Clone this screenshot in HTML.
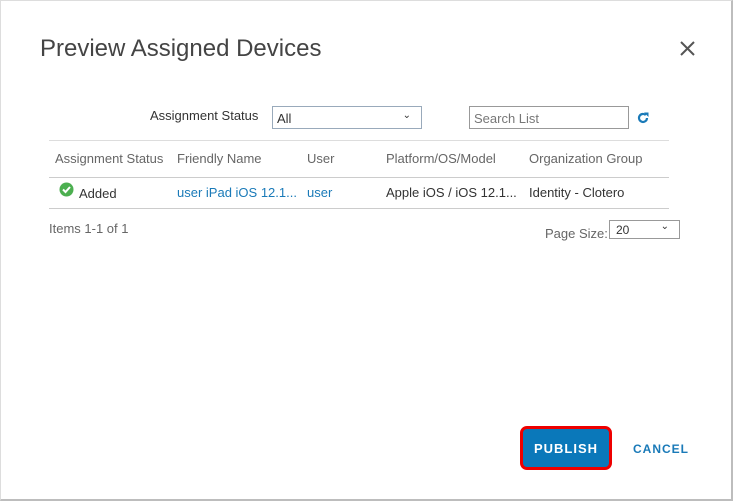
<!DOCTYPE html>
<html><head><style>
*{margin:0;padding:0;box-sizing:border-box}
body{width:735px;height:503px;background:#fff;font-family:"Liberation Sans",sans-serif;position:relative;overflow:hidden}
.frame{position:absolute;left:0;top:0;width:733px;height:501px;border-right:2px solid #bdbdbd;border-bottom:2px solid #bdbdbd;border-top:1px solid #ddd;border-left:1px solid #ddd}
.a{position:absolute;white-space:nowrap}
.h{color:#666;font-size:13px}
.c{color:#333;font-size:13px}
.l{color:#1a7ab8;font-size:13px}
.line{position:absolute;left:49px;width:620px;height:1px;background:#ddd}
</style></head><body>
<div class="frame"></div>
<div class="a" style="left:40px;top:35px;font-size:24px;color:#444">Preview Assigned Devices</div>
<svg class="a" style="left:680px;top:41px" width="15" height="15"><path d="M1 1L14 14M14 1L1 14" stroke="#555" stroke-width="2"/></svg>
<div class="a" style="left:150px;top:108px;font-size:13px;color:#333">Assignment Status</div>
<div class="a" style="left:272px;top:106px;width:150px;height:23px;border:1px solid #9ab;font-size:13px;color:#333;padding:4px 4px">All<span style="position:absolute;right:10px;top:3px;font-size:10px">⌄</span></div>
<div class="a" style="left:469px;top:106px;width:160px;height:23px;border:1px solid #999;font-size:13px;color:#777;padding:4px 4px">Search List</div>
<svg class="a" style="left:636px;top:111px" width="14" height="14" viewBox="0 0 14 14"><path d="M11 7a4 4 0 1 1-1.2-2.9" fill="none" stroke="#1a7ab8" stroke-width="2.2"/><path d="M8 1.5h4.5V6z" fill="#1a7ab8"/></svg>
<div class="line" style="top:140px"></div>
<div class="a h" style="left:55px;top:151px">Assignment Status</div>
<div class="a h" style="left:177px;top:151px">Friendly Name</div>
<div class="a h" style="left:307px;top:151px">User</div>
<div class="a h" style="left:386px;top:151px">Platform/OS/Model</div>
<div class="a h" style="left:529px;top:151px">Organization Group</div>
<div class="line" style="top:177px;background:#ccc"></div>
<svg class="a" style="left:59px;top:182px" width="15" height="15"><circle cx="7.5" cy="7.5" r="7" fill="#4caf50"/><path d="M4 7.5l2.5 2.5 4.5-5" fill="none" stroke="#fff" stroke-width="2"/></svg>
<div class="a c" style="left:79px;top:186px">Added</div>
<div class="a l" style="left:177px;top:185px">user iPad iOS 12.1...</div>
<div class="a l" style="left:307px;top:185px">user</div>
<div class="a c" style="left:386px;top:185px">Apple iOS / iOS 12.1...</div>
<div class="a c" style="left:529px;top:185px">Identity - Clotero</div>
<div class="line" style="top:208px;background:#ccc"></div>
<div class="a h" style="left:49px;top:221px">Items 1-1 of 1</div>
<div class="a h" style="left:545px;top:226px">Page Size:</div>
<div class="a" style="left:609px;top:220px;width:71px;height:19px;border:1px solid #999;font-size:12px;color:#333;padding:2px 6px">20<span style="position:absolute;right:10px;top:0px;font-size:10px">⌄</span></div>
<div class="a" style="left:520px;top:426px;width:92px;height:44px;border:3px solid #e00;border-radius:7px;background:#0a78ba;color:#fff;font-weight:bold;font-size:13px;letter-spacing:1px;text-align:center;line-height:40px">PUBLISH</div>
<div class="a" style="left:633px;top:442px;color:#1a7ab8;font-weight:bold;font-size:12px;letter-spacing:1px">CANCEL</div>
</body></html>
